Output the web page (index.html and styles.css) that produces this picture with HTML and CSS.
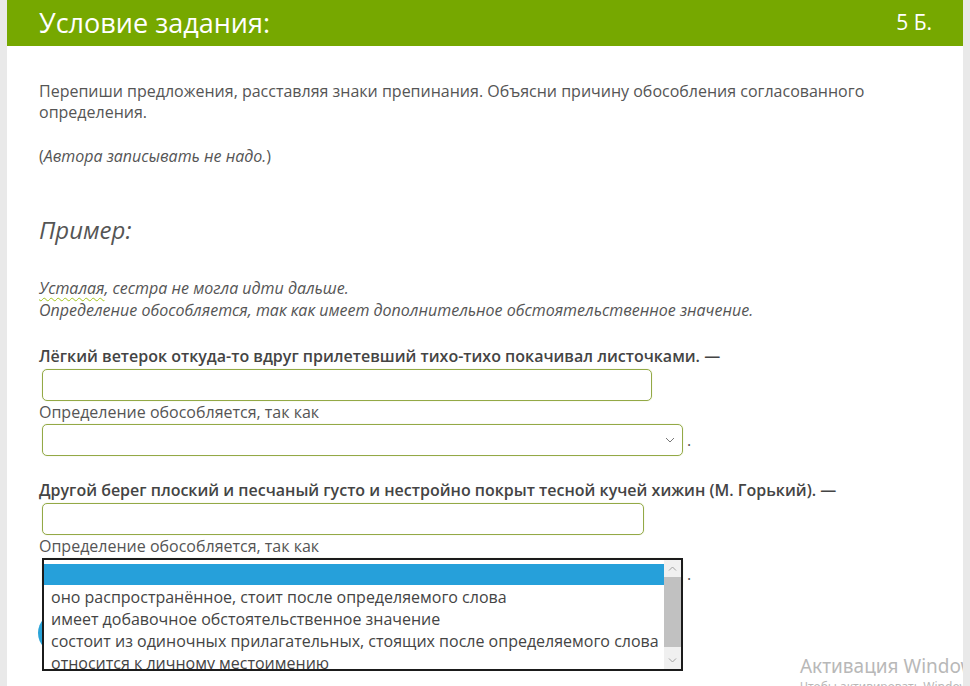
FILE: index.html
```html
<!DOCTYPE html>
<html lang="ru">
<head>
<meta charset="utf-8">
<link rel="stylesheet" href="styles.css">
</head>
<body>
<div class="page">
  <header class="task-head">
    <span class="task-title">Условие задания:</span>
    <span class="task-score">5 Б.</span>
  </header>
  <main class="task-body">
    <p class="intro">Перепиши предложения, расставляя знаки препинания. Объясни причину обособления согласованного определения.</p>
    <p class="note">(<i>Автора записывать не надо.</i>)</p>
    <h2 class="example-title">Пример:</h2>
    <p class="example"><span class="spell">Усталая</span>, сестра не могла идти дальше.<br>Определение обособляется, так как имеет дополнительное обстоятельственное значение.</p>

    <p class="question q-first">Лёгкий ветерок откуда-то вдруг прилетевший тихо-тихо покачивал листочками. —</p>
    <div class="field input-1"></div>
    <p class="label">Определение обособляется, так как</p>
    <div class="select-row row-1">
      <div class="select">
        <svg class="chev" width="10" height="6" viewBox="0 0 10 6"><path d="M1 1l4 4 4-4" fill="none" stroke="#777" stroke-width="1"/></svg>
      </div>
      <span class="dot">.</span>
    </div>

    <p class="question q-second">Другой берег плоский и песчаный густо и нестройно покрыт тесной кучей хижин (М. Горький). —</p>
    <div class="field input-2"></div>
    <p class="label">Определение обособляется, так как</p>
    <div class="select-row row-2">
      <div class="select">
        <div class="listbox">
          <div class="options">
            <div class="opt selected">&nbsp;</div>
            <div class="opt">оно распространённое, стоит после определяемого слова</div>
            <div class="opt">имеет добавочное обстоятельственное значение</div>
            <div class="opt">состоит из одиночных прилагательных, стоящих после определяемого слова</div>
            <div class="opt">относится к личному местоимению</div>
          </div>
          <div class="scrollbar">
            <div class="sb-btn"><svg width="9" height="5" viewBox="0 0 9 5"><path d="M1 4.5l3.5-3.5 3.5 3.5" fill="none" stroke="#a0a0a0" stroke-width="1"/></svg></div>
            <div class="sb-track"><div class="sb-thumb"></div></div>
            <div class="sb-btn"><svg width="9" height="5" viewBox="0 0 9 5"><path d="M1 0.5l3.5 3.5 3.5-3.5" fill="none" stroke="#a0a0a0" stroke-width="1"/></svg></div>
          </div>
        </div>
      </div>
      <span class="dot">.</span>
    </div>
    <button class="check-btn">Проверить</button>
  </main>
  <div class="watermark">
    <div class="wm-1">Активация Windows</div>
    <div class="wm-2">Чтобы активировать Windows, перейдите в раздел «Параметры».</div>
  </div>
</div>
</body>
</html>
```

FILE: styles.css
```css
html, body {
  margin: 0;
  padding: 0;
  height: 100%;
}
body {
  background: #e9e9e9;
  font-family: "Open Sans", "Liberation Sans", sans-serif;
  color: #555;
  overflow: hidden;
}
.page {
  margin-left: 7px;
  width: 956px;
  height: 686px;
  background: #fff;
  position: relative;
  overflow: hidden;
}
.task-head {
  height: 46px;
  background: #76a800;
  color: #fff;
  display: flex;
  justify-content: space-between;
  align-items: center;
  padding: 0 31px 0 32px;
}
.task-title {
  font-size: 27px;
  margin-top: -2px;
}
.task-score {
  font-size: 21px;
  margin-top: -2px;
}
.task-body {
  padding: 0 32px;
}
p { margin: 0; }
.intro {
  font-size: 16px;
  line-height: 21px;
  margin-top: 35px;
  padding-right: 50px;
}
.note {
  font-size: 16px;
  line-height: 21px;
  margin-top: 23px;
}
.example-title {
  margin: 47px 0 0;
  font-size: 24px;
  line-height: 32px;
  font-style: italic;
  font-weight: normal;
  color: #555;
}
.example {
  margin-top: 31px;
  font-size: 16px;
  line-height: 22px;
  font-style: italic;
}
.spell {
  text-decoration: underline wavy #a3c41a;
  text-decoration-thickness: 1px;
  text-underline-offset: 3px;
}
.question {
  font-size: 16px;
  line-height: 21px;
  font-weight: 600;
  color: #444;
}
.q-first { margin-top: 25px; }
.q-second { margin-top: 23.5px; }
.field {
  margin: 2px 0 0 3px;
  height: 30px;
  border: 1px solid #93a946;
  border-radius: 5px;
  box-shadow: 0 0 1px #c8d79a;
}
.input-1 { width: 608px; }
.input-2 { width: 600px; }
.label {
  font-size: 16px;
  line-height: 22px;
  color: #555;
}
.select-row {
  display: flex;
  align-items: center;
  margin-left: 3px;
}
.row-1 { margin-top: 1px; }
.row-2 { margin-top: 1px; }
.select {
  width: 639px;
  height: 30px;
  border: 1px solid #93a946;
  border-radius: 5px;
  box-shadow: 0 0 1px #c8d79a;
  display: flex;
  align-items: center;
  justify-content: flex-end;
  position: relative;
}
.chev { margin-right: 7px; }
.dot {
  font-size: 16px;
  line-height: 16px;
  margin-left: 4px;
  color: #555;
}
.listbox {
  position: absolute;
  left: -1px;
  top: -1px;
  width: 637px;
  height: 109px;
  border: 2px solid #1b1b1b;
  background: #fff;
  display: flex;
  z-index: 5;
  overflow: hidden;
}
.options {
  flex: 1;
  padding-top: 4px;
}
.opt {
  font-size: 16px;
  line-height: 22.3px;
  height: 22.3px;
  padding-left: 7px;
  color: #444;
  white-space: nowrap;
}
.opt.selected {
  background: #26a0da;
  height: 21px;
  margin-bottom: 1px;
}
.scrollbar {
  width: 17px;
  background: #f0f0f0;
  display: flex;
  flex-direction: column;
}
.sb-btn {
  height: 17px;
  display: flex;
  align-items: center;
  justify-content: center;
}
.sb-track {
  flex: 1;
  display: flex;
  flex-direction: column;
}
.sb-thumb {
  height: 70px;
  background: #c1c1c1;
}
.check-btn {
  margin: 23px 0 0 -1px;
  height: 40px;
  width: 150px;
  border: none;
  border-radius: 20px;
  background: #2aa3d8;
  color: #fff;
  font-family: "Open Sans", sans-serif;
  font-size: 15px;
  display: block;
}
.watermark {
  position: absolute;
  left: 793px;
  top: 653px;
  color: #b8b8b8;
  font-family: "Noto Sans", "Open Sans", sans-serif;
  white-space: nowrap;
}
.wm-1 {
  font-size: 19px;
  line-height: 26px;
}
.wm-2 {
  font-size: 12px;
  line-height: 16px;
}
```
